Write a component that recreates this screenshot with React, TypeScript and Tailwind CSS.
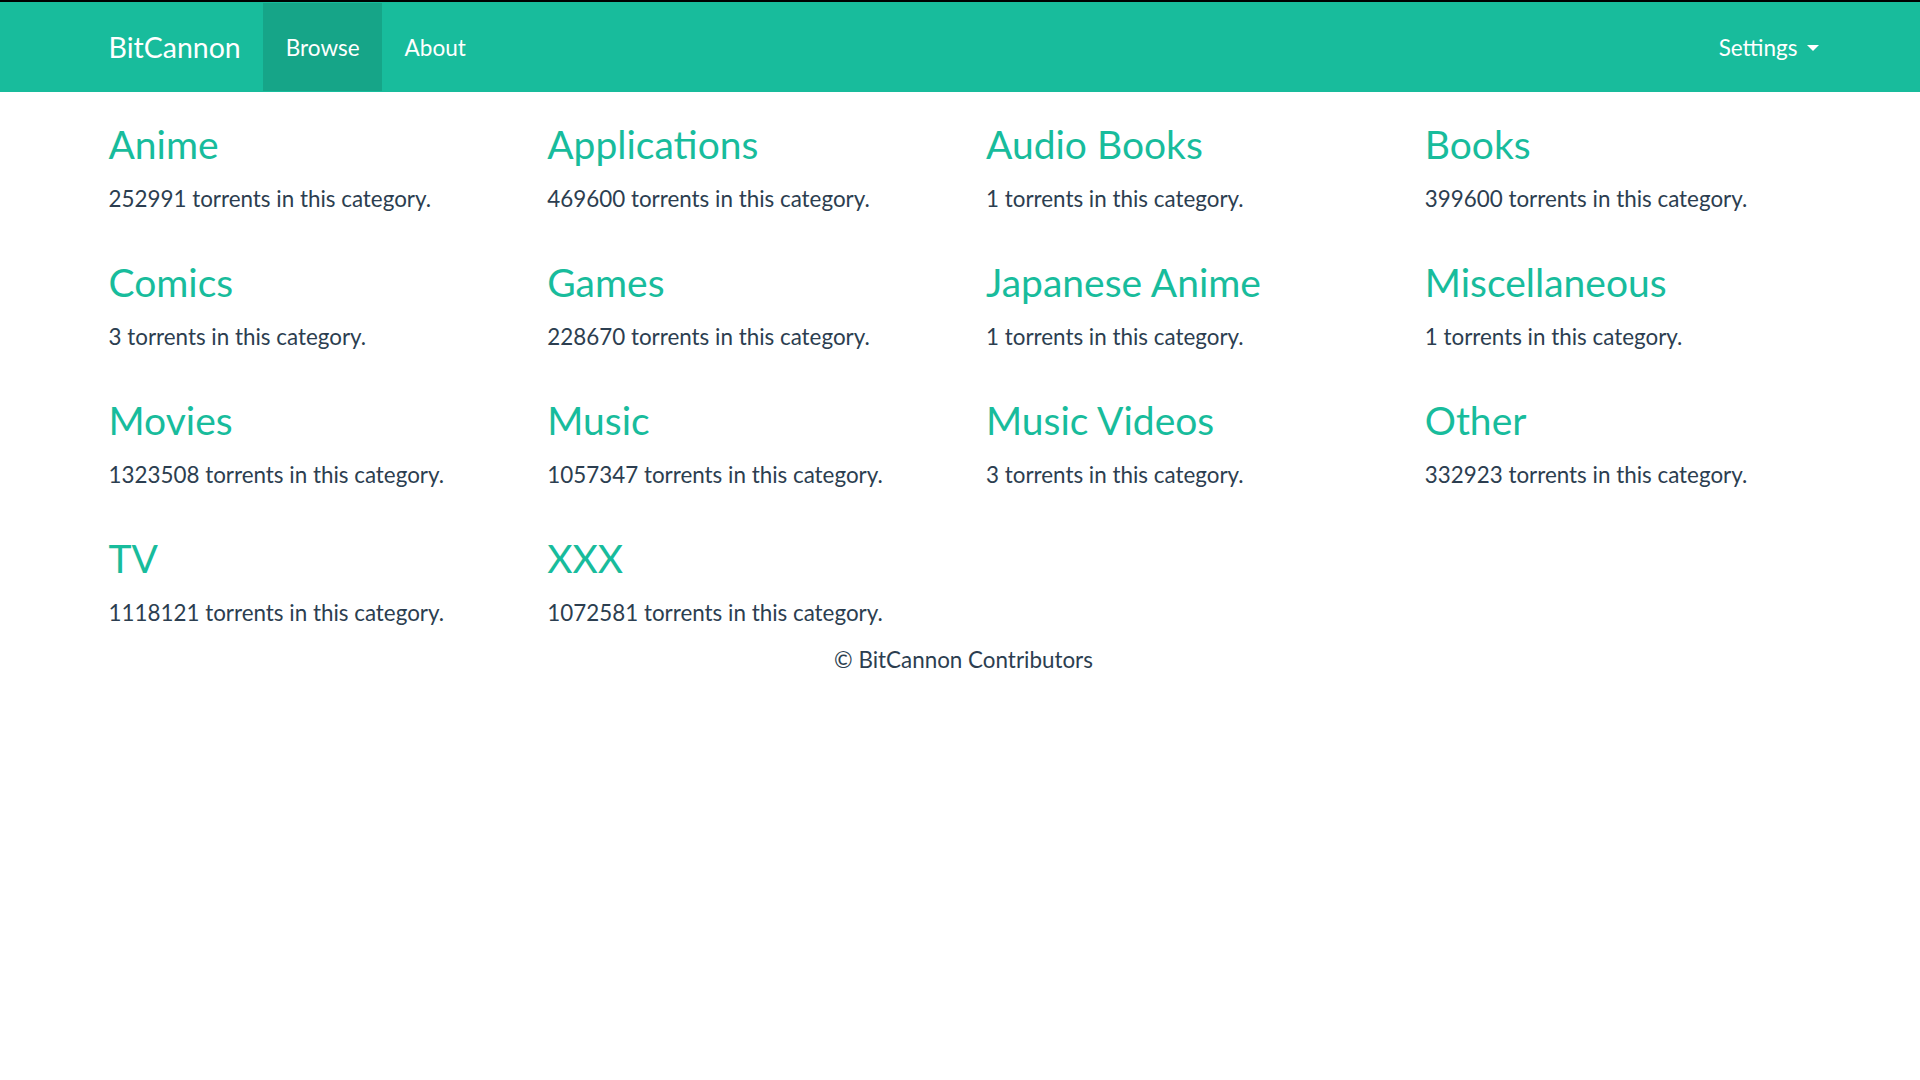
const CATEGORIES = [
  { name: "Anime", count: 252991 },
  { name: "Applications", count: 469600 },
  { name: "Audio Books", count: 1 },
  { name: "Books", count: 399600 },
  { name: "Comics", count: 3 },
  { name: "Games", count: 228670 },
  { name: "Japanese Anime", count: 1 },
  { name: "Miscellaneous", count: 1 },
  { name: "Movies", count: 1323508 },
  { name: "Music", count: 1057347 },
  { name: "Music Videos", count: 3 },
  { name: "Other", count: 332923 },
  { name: "TV", count: 1118121 },
  { name: "XXX", count: 1072581 },
];

const Navbar = () => (
  <nav className="h-[90px] bg-[#18bc9c] text-white">
    <div className="ml-[86px] w-[1755px] h-full flex items-center pt-[2px]">
      <a href="#" className="px-[22.5px] text-[28.5px] leading-[31.5px]">
        BitCannon
      </a>
      <a href="#" className="h-full -mt-[2px] pt-[2px] flex items-center px-[22.5px] text-[22.5px] leading-[31.5px] bg-[#16a588]">
        Browse
      </a>
      <a href="#" className="px-[22.5px] text-[22.5px] leading-[31.5px]">
        About
      </a>
      <div className="ml-auto flex items-center px-[22.5px] text-[22.5px] leading-[31.5px]">
        Settings
        <span className="inline-block ml-[9px] w-0 h-0 border-t-[6px] border-x-[6px] border-x-transparent border-t-white" />
      </div>
    </div>
  </nav>
);

export default function App() {
  return (
    <div className="min-h-screen bg-white text-[#2c3e50]" style={{ fontFamily: "Lato, 'Open Sans', sans-serif" }}>
      <div className="h-[2px] bg-black" />
      <Navbar />

      <div className="ml-[86px] w-[1755px] px-[22.5px]">
        <div className="grid grid-cols-4 gap-y-[45px] pt-[30px] -mx-[22.5px]">
          {CATEGORIES.map((cat) => (
            <div key={cat.name} className="px-[22.5px]">
              <h2 className="text-[39px] leading-[44px] mb-[17px] text-[#18bc9c]">
                <a href="#">{cat.name}</a>
              </h2>
              <p className="text-[22.4px] leading-[32px]">{cat.count} torrents in this category.</p>
            </div>
          ))}
        </div>

        {/* footer */}
        <p className="mt-[15px] text-center text-[22.4px] leading-[32px]">© BitCannon Contributors</p>
      </div>
    </div>
  );
}
